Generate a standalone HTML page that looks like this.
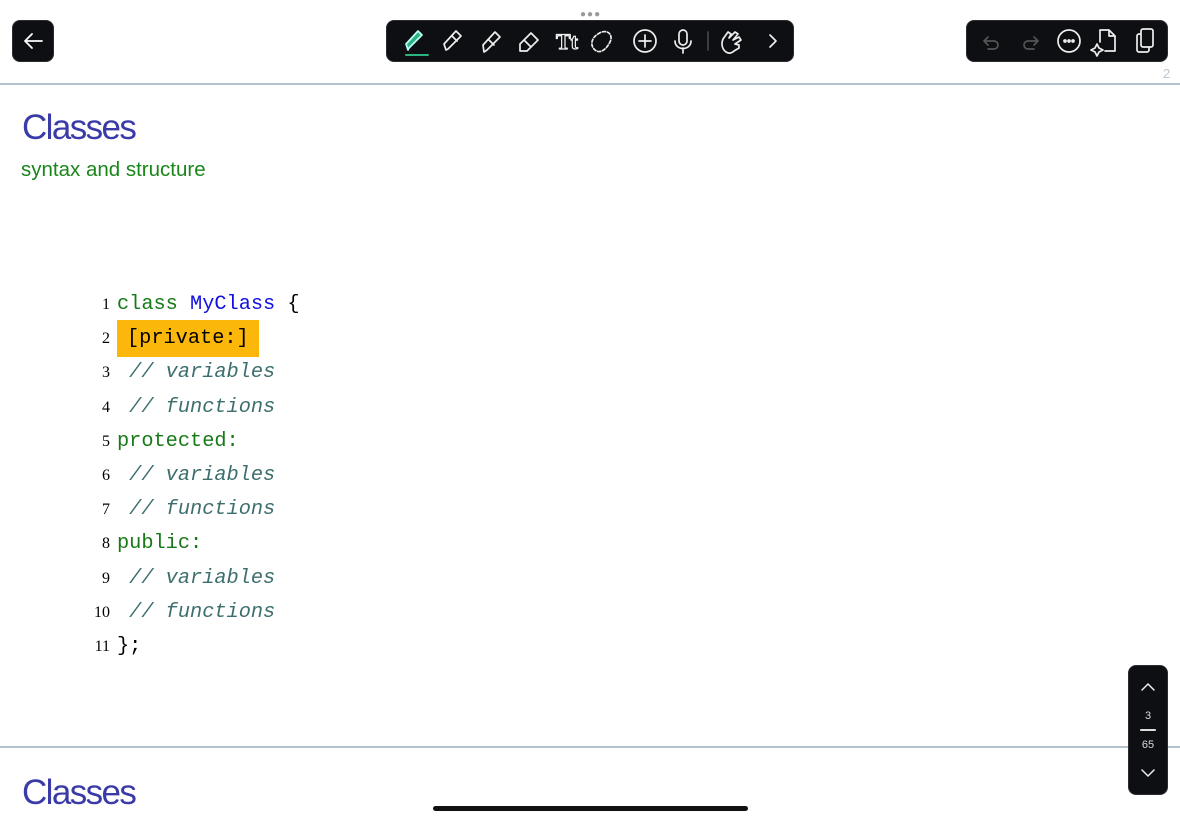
<!DOCTYPE html>
<html><head><meta charset="utf-8"><style>
*{margin:0;padding:0;box-sizing:border-box}
body{width:1180px;height:820px;overflow:hidden;background:#fff;position:relative;font-family:"Liberation Sans",sans-serif}
.bar{position:absolute;background:#0e0f12;border-radius:8px;border:1px solid #2a2c30}
.hr{position:absolute;left:0;width:1180px;height:2px;background:#b4c2cc}
.title{position:absolute;left:22px;color:#3b3ba8;font-size:35px;font-family:"Liberation Sans",sans-serif;letter-spacing:-1.6px}
.sub{position:absolute;left:21px;top:158px;color:#1a861a;font-size:20.5px;font-family:"Liberation Sans",sans-serif}
.code{position:absolute;left:80px;top:288px;font-family:"Liberation Mono",monospace;font-size:20.3px}
.ln{height:34.2px;line-height:34.2px;white-space:pre;position:relative}
.n{display:inline-block;width:30px;text-align:right;font-family:"Liberation Serif",serif;font-size:16px;color:#000;margin-right:7px}
.k{color:#177a17}.b{color:#1010e0}.c{color:#3d6e6e;font-style:italic}
.hl{background:#fbb70a;padding:7px 10px}
svg{position:absolute}
</style></head><body>
<div style="position:absolute;left:580px;top:9px;font-size:10px;color:#999;letter-spacing:1px">●●●</div>
<div class="bar" style="left:12px;top:20px;width:42px;height:42px"></div>
<svg style="left:12px;top:20px" width="42" height="42"><path d="M30 21H13M20 14l-7 7 7 7" stroke="#fff" stroke-width="1.8" fill="none" stroke-linecap="round" stroke-linejoin="round"/></svg>
<div class="bar" style="left:386px;top:20px;width:408px;height:42px"></div>
<svg style="left:386px;top:20px" width="408" height="42" fill="none" stroke="#eee" stroke-width="1.7" stroke-linecap="round" stroke-linejoin="round">
<path d="M22 30l-2 -6 12-13 4 4-13 13z" fill="#2db37e" stroke="#bff"/><line x1="20" y1="35" x2="42" y2="35" stroke="#2db37e" stroke-width="2"/>
<path d="M60 30l-2-6 12-13 5 5-13 13z M66 16l5 5"/>
<path d="M98 32l-1-7 12-13 5 5-13 13z M103 20l5 5"/>
<path d="M134 24l11-11 7 7-11 11h-7z M138 20l7 7"/>
<text x="170" y="29" fill="none" stroke="#eee" stroke-width="1.2" font-size="22" font-weight="bold" font-family="Liberation Serif">Tt</text>
<path d="M212 14c8-6 16 0 12 8s-10 12-15 8-4-12 3-16z" stroke-dasharray="3 2"/>
<circle cx="259" cy="21" r="11"/><path d="M259 15v12M253 21h12"/>
<rect x="293" y="10" width="8" height="15" rx="4"/><path d="M289 21c0 10 16 10 16 0M297 28v5"/>
<line x1="322" y1="12" x2="322" y2="30" stroke="#444"/>
<path d="M340 32c-4-3-5-8-3-13l5-7 3 2-2 4 6-6 3 2-5 6 6-3 2 3-6 4 4 1 0 3-5 3c-2 2-5 3-8 1z"/>
<path d="M384 15l6 6-6 6"/>
</svg>
<div class="bar" style="left:966px;top:20px;width:202px;height:42px"></div>
<svg style="left:966px;top:20px" width="202" height="42" fill="none" stroke-width="1.7" stroke-linecap="round" stroke-linejoin="round">
<path d="M22 17l-4 4 4 4M18 21h10a4 4 0 010 8h-6" stroke="#555"/>
<path d="M68 17l4 4-4 4M72 21H62a4 4 0 000 8h6" stroke="#555"/>
<circle cx="103" cy="21" r="11" stroke="#eee"/><circle cx="99" cy="21" r="1" fill="#eee" stroke="#eee"/><circle cx="103" cy="21" r="1" fill="#eee" stroke="#eee"/><circle cx="107" cy="21" r="1" fill="#eee" stroke="#eee"/>
<path d="M134 22V10h9l6 6v15h-10M143 10v6h6M131 24l2 4 4 2-4 2-2 4-2-4-4-2 4-2z" stroke="#eee"/>
<rect x="171" y="14" width="12" height="18" rx="2" stroke="#eee"/><rect x="175" y="9" width="12" height="18" rx="2" stroke="#eee" fill="#0e0f12"/>
</svg>
<div style="position:absolute;left:1163px;top:66px;font-size:13px;color:#b8c6d0">2</div>
<div class="hr" style="top:83px"></div>
<div class="title" style="top:108px">Classes</div>
<div class="sub">syntax and structure</div>
<div class="code">
<div class="ln"><span class="n">1</span><span class="k">class</span> <span class="b">MyClass</span> {</div>
<div class="ln"><span class="n">2</span><span class="hl">[private:]</span></div>
<div class="ln"><span class="n">3</span> <span class="c">// variables</span></div>
<div class="ln"><span class="n">4</span> <span class="c">// functions</span></div>
<div class="ln"><span class="n">5</span><span class="k">protected</span><span class="k">:</span></div>
<div class="ln"><span class="n">6</span> <span class="c">// variables</span></div>
<div class="ln"><span class="n">7</span> <span class="c">// functions</span></div>
<div class="ln"><span class="n">8</span><span class="k">public:</span></div>
<div class="ln"><span class="n">9</span> <span class="c">// variables</span></div>
<div class="ln"><span class="n">10</span> <span class="c">// functions</span></div>
<div class="ln"><span class="n">11</span>};</div>
</div>
<div class="hr" style="top:746px"></div>
<div class="title" style="top:773px">Classes</div>
<div style="position:absolute;left:433px;top:806px;width:315px;height:5px;border-radius:3px;background:#111"></div>
<div class="bar" style="left:1128px;top:665px;width:40px;height:130px"></div>
<svg style="left:1128px;top:665px" width="40" height="130" fill="none" stroke="#eee" stroke-width="1.5" stroke-linecap="round"><path d="M14 25l6-6 6 6M14 105l6 6 6-6"/><line x1="13" y1="65" x2="27" y2="65" stroke="#ddd" stroke-width="2"/>
<text x="20" y="54" fill="#ddd" stroke="none" font-size="11" text-anchor="middle" font-family="Liberation Sans">3</text>
<text x="20" y="83" fill="#ddd" stroke="none" font-size="11" text-anchor="middle" font-family="Liberation Sans">65</text></svg>
</body></html>
